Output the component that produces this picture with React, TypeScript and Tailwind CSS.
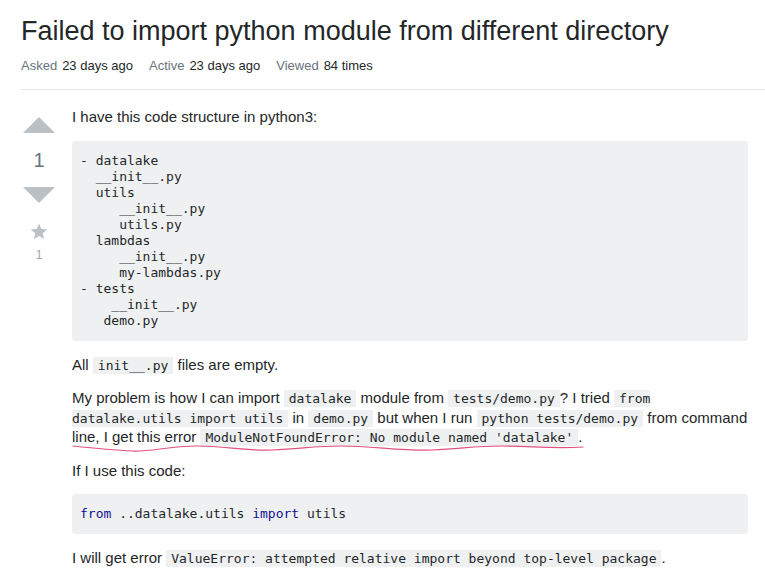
import React from 'react'

const mono = "font-['DejaVu_Sans_Mono',Menlo,monospace]"

const Code: React.FC<{ children: React.ReactNode }> = ({ children }) => (
  <code className={`${mono} text-[13px] leading-[15px] bg-[#eff0f1] px-[5px] py-[1px] text-[#242729]`}>{children}</code>
)

const Meta: React.FC<{ label: string; value: string }> = ({ label, value }) => (
  <div className="flex items-center gap-[5px]">
    <span className="text-[#6a737c]">{label}</span>
    <span className="text-[#242729]">{value}</span>
  </div>
)

const tree = `- datalake
  __init__.py
  utils
     __init__.py
     utils.py
  lambdas
     __init__.py
     my-lambdas.py
- tests
    __init__.py
   demo.py`

const App: React.FC = () => {
  return (
    <div className="w-[765px] h-[584px] overflow-hidden bg-white font-['Liberation_Sans',Arial,sans-serif] text-[#242729]">
      {/* Header */}
      <div className="pl-[21px]">
        <h1 className="pt-[13px] text-[27px] leading-[36px] font-normal">
          Failed to import python module from different directory
        </h1>
        <div className="mt-[8px] flex gap-[16px] text-[13px] leading-[17px]">
          <Meta label="Asked" value="23 days ago" />
          <Meta label="Active" value="23 days ago" />
          <Meta label="Viewed" value="84 times" />
        </div>
        <div className="mt-[15px] h-px bg-[#e4e6e8]" />
      </div>

      {/* Post */}
      <div className="flex pl-[21px] pt-[17px]">
        {/* Votes */}
        <div className="w-[36px] flex flex-col items-center shrink-0">
          <svg width="32" height="16" viewBox="0 0 32 16" className="mt-[10px]">
            <path d="M0 16 L16 0 L32 16 Z" fill="#bbc0c4" />
          </svg>
          <div className="mt-[14px] h-[26px] text-[20px] leading-[26px] text-[#6a737c]">1</div>
          <svg width="32" height="16" viewBox="0 0 32 16" className="mt-[14px]">
            <path d="M0 0 L32 0 L16 16 Z" fill="#bbc0c4" />
          </svg>
          <svg width="18" height="17" viewBox="0 0 24 23" className="mt-[20px]">
            <path
              d="M12 0.8 L15.1 8.1 L23 8.7 L17 13.9 L18.9 21.6 L12 17.5 L5.1 21.6 L7 13.9 L1 8.7 L8.9 8.1 Z"
              fill="#bbc0c4"
            />
          </svg>
          <div className="mt-[8px] text-[12px] leading-[15px] text-[#9fa6ad]">1</div>
        </div>

        {/* Body */}
        <div className="ml-[15px] w-[676px] text-[15px] leading-[19.5px]">
          <p className="mb-[14px]">I have this code structure in python3:</p>
          <pre className={`mb-[14px] ${mono} text-[13px] leading-[16px] bg-[#eff0f1] rounded-[3px] px-[8px] py-[12px] text-[#242729]`}>
            {tree}
          </pre>
          <p className="mb-[14px]">
            All <Code>init__.py</Code> files are empty.
          </p>
          <div className="relative mb-[14px]">
            <p>
              My problem is how I can import <Code>datalake</Code> module from <Code>tests/demo.py</Code>? I tried{' '}
              <Code>from datalake.utils import utils</Code> in <Code>demo.py</Code> but when I run{' '}
              <Code>python tests/demo.py</Code> from command line, I get this error{' '}
              <Code>ModuleNotFoundError: No module named 'datalake'</Code>.
            </p>
            {/* hand-drawn underline */}
            <svg
              width="520"
              height="12"
              viewBox="0 0 520 12"
              className="absolute left-0 top-[54px] pointer-events-none"
              fill="none"
            >
              <path
                d="M1 4 C 20 6, 40 8, 60 9 S 95 4, 125 4 S 170 9, 200 8 S 240 4, 270 4 S 330 9, 360 8 S 400 4, 430 4 S 480 7, 511 5"
                stroke="#e2507f"
                strokeWidth="1.2"
                strokeLinecap="round"
              />
            </svg>
          </div>
          <p className="mb-[14px]">If I use this code:</p>
          <pre className={`mb-[14px] ${mono} text-[13px] leading-[16px] bg-[#eff0f1] rounded-[3px] px-[8px] py-[12px] text-[#242729]`}>
            <span className="text-[#101094]">from</span> ..datalake.utils <span className="text-[#101094]">import</span> utils
          </pre>
          <p className="mb-[14px]">
            I will get error <Code>ValueError: attempted relative import beyond top-level package</Code>.
          </p>
          <p className="mb-[14px]">
            I also tried adding the parent path <Code>../..</Code> into <Code>PYTHONPATH</Code> but I still get the same error when I call <Code>demo</Code>.
          </p>
        </div>
      </div>
    </div>
  )
}

export default App
